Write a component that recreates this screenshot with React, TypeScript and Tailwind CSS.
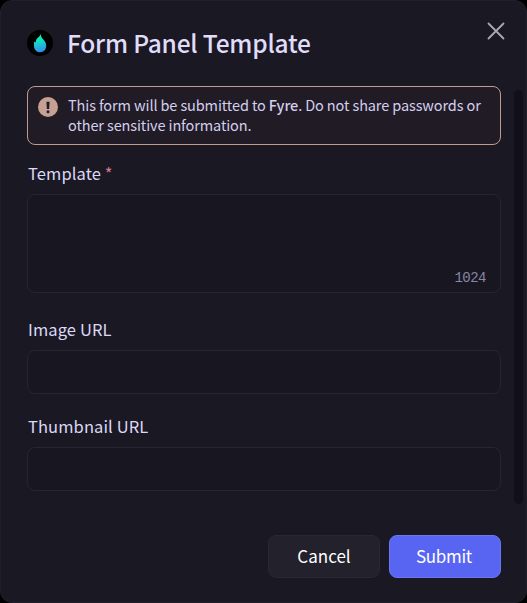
import type { ReactNode } from "react";

function FlameLogo() {
  return (
    <svg className="block size-[26px] shrink-0" viewBox="0 0 26 26" aria-hidden="true">
      <defs>
        <linearGradient id="flame" x1="0.3" y1="0" x2="0.5" y2="1">
          <stop offset="0.3" stopColor="#08edb8" />
          <stop offset="0.65" stopColor="#22b9d8" />
          <stop offset="1" stopColor="#318cf0" />
        </linearGradient>
      </defs>
      <circle cx="13" cy="13" r="13" fill="#000" />
      <path
        d="M14 4C13.8 6.6 14.8 8.1 16.5 9.8C18.1 11.4 19.2 13.3 19.2 15.7C19.2 19.4 16.6 22.2 13.1 22.2C9.5 22.2 7.1 19.5 7 16.2C7 14.4 7.2 13 6.8 11.4C7.7 11.7 8.3 12 8.8 12.5C8.8 11 9 9.9 9.9 8.8C11 7.3 13 6.4 14 4Z"
        fill="url(#flame)"
      />
    </svg>
  );
}

function Label({ children }: { children: ReactNode }) {
  return (
    <label className="flex h-5 items-center whitespace-pre pb-0.5 pl-px text-[16.5px] leading-[18px] tracking-[0.1px] text-[#dcd9f5]">
      {children}
    </label>
  );
}

const field = "w-full rounded-lg border border-[#262531] bg-[#181620]";

export default function App() {
  return (
    <div className="h-[603px] w-[527px] bg-black font-['Noto_Sans_CJK_SC','Noto_Sans',sans-serif]">
      <div className="flex h-full flex-col rounded-xl border border-[#211f2b] bg-[#1a1823] pl-[26px]">
        <header className="flex h-[85px] shrink-0 items-start justify-between pr-[21px]">
          <div className="flex items-center pt-[24px]">
            <FlameLogo />
            <h1 className="ml-[14px] whitespace-nowrap text-[24.5px] font-medium leading-9 tracking-[-0.2px] text-[#e0dcfb]">
              Form Panel Template
            </h1>
          </div>
          <button className="mt-[21px]" aria-label="Close">
            <svg className="block size-[18px]" viewBox="0 0 18 18" fill="none" stroke="#aaa9ae" strokeWidth="1.8" strokeLinecap="round">
              <path d="M1.5 1.5L16.5 16.5M16.5 1.5L1.5 16.5" />
            </svg>
          </button>
        </header>

        <div className="flex h-[418px] shrink-0 justify-between pr-[3px]">
          <main className="w-[474px]">
            <div className="flex h-[59px] gap-[10px] rounded-lg border border-[#c19c8c] bg-[#211b25] pl-[10px] pt-2">
              <svg className="mt-0.5 block size-5 shrink-0" viewBox="0 0 20 20" aria-hidden="true">
                <circle cx="10" cy="10" r="10" fill="#c5a093" />
                <path d="M8.4 4.8h3.2l-.5 7.2H8.9z" fill="#211b25" />
                <circle cx="10" cy="14.8" r="1.5" fill="#211b25" />
              </svg>
              <p className="whitespace-nowrap text-[14.5px] leading-5 tracking-[-0.115px] text-[#d3cfee]">
                This form will be submitted to <span className="font-medium">Fyre</span>. Do not share passwords or
                <br />
                other sensitive information.
              </p>
            </div>

            <div className="mt-[19px] flex flex-col gap-[10px]">
              <Label>
                Template <span className="text-[#d77a8c]">*</span>
              </Label>
              <div className={`${field} flex h-[99px] items-end justify-end pb-[5px] pr-[14px]`}>
                <span className="font-['Liberation_Mono',monospace] text-[14px] leading-[18px] tracking-[-0.5px] text-[#8985a5]">1024</span>
              </div>
            </div>
            <div className="mt-[27px] flex flex-col gap-[10px]">
              <Label>Image URL</Label>
              <input className={`${field} h-11`} />
            </div>
            <div className="mt-[23px] flex flex-col gap-[10px]">
              <Label>Thumbnail URL</Label>
              <input className={`${field} h-11`} />
            </div>
          </main>
          <div className="mt-1 h-[414px] w-[9px] rounded-full bg-[#110f18]" />
        </div>

        <footer className="flex justify-end gap-[9px] pr-[25px] pt-[31px]">
          <button className="h-[43px] w-28 rounded-lg border border-[#292733] bg-[#23212c] pb-px text-[17px] text-white">
            Cancel
          </button>
          <button className="h-[43px] w-28 rounded-lg border border-[#6c76f5] bg-[#5865f2] pb-px pr-[2px] text-[17px] tracking-[-0.3px] text-white">
            Submit
          </button>
        </footer>
      </div>
    </div>
  );
}
